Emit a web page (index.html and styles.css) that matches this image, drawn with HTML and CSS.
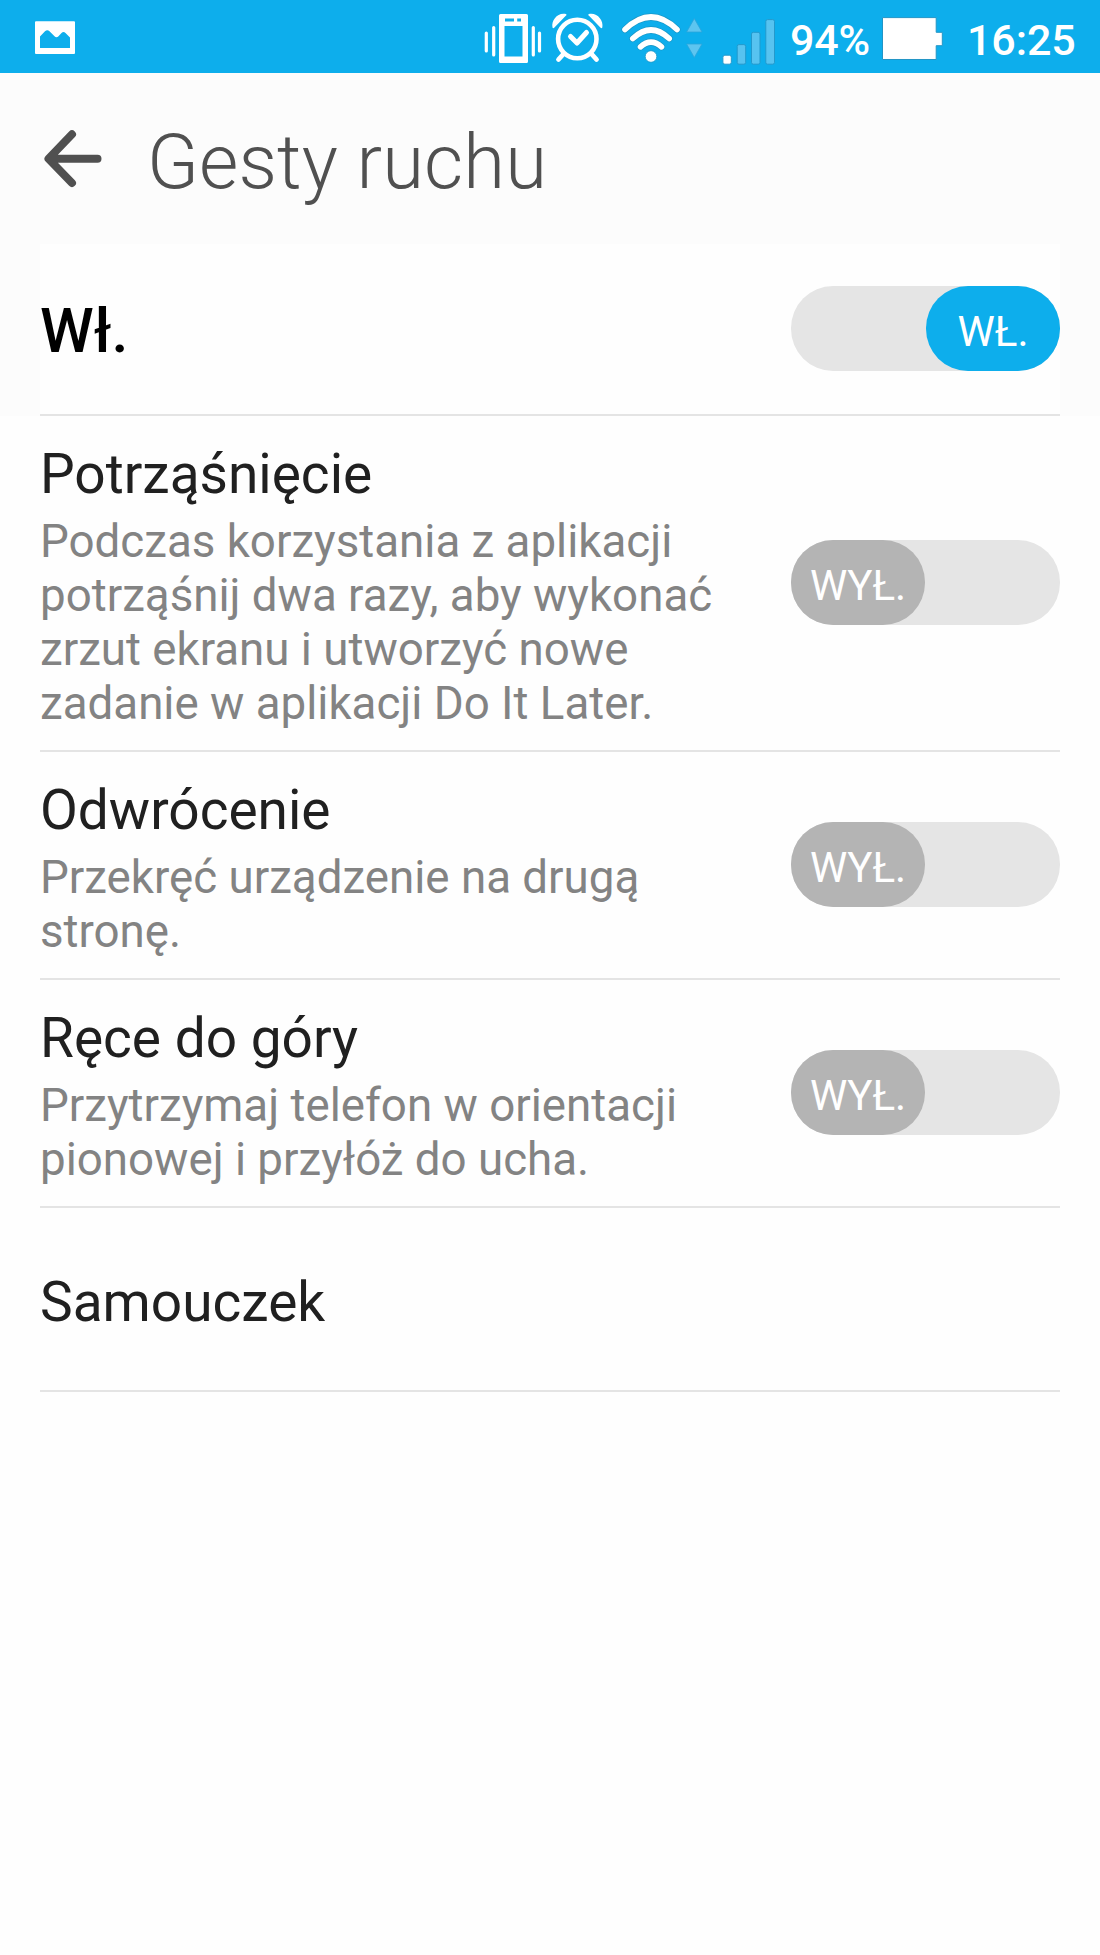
FILE: index.html
```html
<!DOCTYPE html>
<html lang="pl">
<head>
<meta charset="utf-8">
<title>Gesty ruchu</title>
<link rel="stylesheet" href="styles.css">
</head>
<body>
<header class="status-bar">
  <svg class="icon-gallery" width="40" height="73" viewBox="35 0 40 73" aria-hidden="true">
    <path fill="#fff" fill-rule="evenodd" d="M36 21.300h38q1 0 1 1V53q0 1-1 1H36q-1 0-1-1V22.300q0-1 1-1zM40 36.500V48h30V37.500l-4.500-4.500q-2-2-4 0l-3 3.200q-2 2-4 0L49.500 31.200q-2.200-2-4.500 0z"/>
  </svg>
  <div class="status-icons">
    <svg width="66" height="73" viewBox="482 0 66 73" aria-hidden="true">
      <path fill="#fff" fill-rule="evenodd" d="M500.500 14h26a1.500 1.500 0 0 1 1.500 1.500v46a1.500 1.500 0 0 1-1.500 1.500h-26a1.500 1.500 0 0 1-1.500-1.500v-46a1.500 1.500 0 0 1 1.500-1.500zM504.500 26v30.500h18V26zM505 18.500v3h9v-3zM517.200 18.500v3h3.800v-3z"/>
      <path fill="none" stroke="#fff" stroke-width="3.200" stroke-linecap="round" d="M486.300 33v18M493.700 27.500v27.500M533.300 27.500v27.500M539.500 33v18"/>
    </svg>
    <svg width="56" height="73" viewBox="550 0 56 73" aria-hidden="true">
      <circle cx="577.300" cy="39" r="19.200" fill="none" stroke="#fff" stroke-width="4.600"/>
      <path fill="none" stroke="#fff" stroke-width="4.800" stroke-linecap="round" d="M563 54.500l-4.500 5M592 54.500l4.500 5"/>
      <path fill="none" stroke="#fff" stroke-width="5" stroke-linecap="round" stroke-linejoin="round" d="M570.500 36.500l6.500 6.500 9.500-10.500"/>
      <path fill="#fff" d="M552.500 27.500c-1.500-7.500 5.500-15.500 13.500-13.500.8.500.5 1.300-.2 1.800L554.200 27.700c-.6.600-1.400.6-1.700-.2zM602.300 27.500c1.500-7.500-5.500-15.500-13.500-13.500-.8.500-.5 1.300.2 1.800l11.600 11.900c.6.600 1.400.6 1.700-.2z"/>
    </svg>
    <svg width="100" height="73" viewBox="614 0 100 73" aria-hidden="true">
      <g fill="none" stroke-linecap="round">
        <path stroke="#1997c8" stroke-width="7" d="M625 29.500Q651 4.500 677 29.500M632.800 38.500Q651 21.500 669.200 38.500M640.500 46.800Q651 37.500 661.500 46.800"/>
        <path stroke="#fff" stroke-width="5.600" d="M625 29.500Q651 4.500 677 29.500M632.800 38.500Q651 21.500 669.200 38.500M640.500 46.800Q651 37.500 661.500 46.800"/>
      </g>
      <circle cx="651" cy="56.500" r="5.800" fill="#fff" stroke="#1997c8" stroke-width=".8"/>
      <path fill="#5dc5f0" stroke="#2ba5da" stroke-width=".8" stroke-linejoin="round" d="M694.300 18.500l7.700 13.500h-15.400zM694.300 57.500l7.700-13.500h-15.400z"/>
    </svg>
    <svg width="56" height="73" viewBox="720 0 56 73" aria-hidden="true">
      <g fill="#57c3f0" stroke="#2399cc">
        <rect x="722.900" y="55.200" width="8.400" height="9" rx="2" fill="#fff"/>
        <rect x="737.200" y="44.600" width="8.500" height="19.600" rx="1.800"/>
        <rect x="751.500" y="32.300" width="8.500" height="31.900" rx="1.800"/>
        <rect x="765.800" y="19.600" width="8.700" height="44.600" rx="1.800"/>
      </g>
    </svg>
  </div>
  <span class="status-text battery-level">94%</span>
  <svg class="icon-battery" width="62" height="73" viewBox="881 0 62 73" aria-hidden="true">
    <path fill="#fff" stroke="#2295c6" d="M882.500 17.600h53.700v14.700h6.100v13.400h-6.100v13.800h-53.700z"/>
  </svg>
  <span class="status-text clock">16:25</span>
</header>

<div class="title-bar">
  <svg width="60" height="60" viewBox="44 129 60 60" aria-label="Wstecz">
    <path fill="none" stroke="#505050" stroke-width="8" stroke-linecap="round" stroke-linejoin="round" d="M73 134.300L49.500 158.800 73 183M51 158.800h47.500"/>
  </svg>
  <h1 class="title">Gesty ruchu</h1>
</div>

<div class="master">
  <div class="master-row">
    <span class="master-label">Wł.</span>
    <div class="toggle on"><span class="thumb">WŁ.</span></div>
  </div>
</div>

<main class="list">
  <section class="row">
    <div class="row-text">
      <h2 class="row-title">Potrząśnięcie</h2>
      <p class="row-desc">Podczas korzystania z aplikacji<br>potrząśnij dwa razy, aby wykonać<br>zrzut ekranu i utworzyć nowe<br>zadanie w aplikacji Do It Later.</p>
    </div>
    <div class="toggle"><span class="thumb">WYŁ.</span></div>
  </section>
  <section class="row">
    <div class="row-text">
      <h2 class="row-title">Odwrócenie</h2>
      <p class="row-desc">Przekręć urządzenie na drugą<br>stronę.</p>
    </div>
    <div class="toggle"><span class="thumb">WYŁ.</span></div>
  </section>
  <section class="row">
    <div class="row-text">
      <h2 class="row-title">Ręce do góry</h2>
      <p class="row-desc">Przytrzymaj telefon w orientacji<br>pionowej i przyłóż do ucha.</p>
    </div>
    <div class="toggle"><span class="thumb">WYŁ.</span></div>
  </section>
  <section class="row row-single">
    <h2 class="row-title">Samouczek</h2>
  </section>
</main>
</body>
</html>
```
FILE: styles.css
```css
* { box-sizing: border-box; }

body {
  margin: 0;
  min-height: 1955px;
  background: #fefefe;
  font-family: Roboto, "Liberation Sans", sans-serif;
}

h1, h2, p { margin: 0; font-weight: 400; }
svg { display: block; flex: none; }

.status-bar {
  display: flex;
  align-items: center;
  height: 73px;
  padding: 0 25px 0 35px;
  background: #0daeec;
}
.status-icons {
  display: grid;
  grid-template-columns: 68px 64px 106px 56px;
  margin-left: auto;
}
.status-text {
  color: #fff;
  font-size: 43px;
  font-weight: 500;
  line-height: 73px;
  white-space: nowrap;
  padding-top: 7px;
}
.battery-level { width: 90px; margin-left: 14px; letter-spacing: -0.2px; }
.icon-battery { margin-left: 1px; }
.clock { width: 108px; margin-left: 24px; letter-spacing: -0.1px; }

.title-bar {
  display: flex;
  align-items: center;
  gap: 44px;
  height: 171px;
  padding-left: 43px;
  background: #fcfcfc;
}
.title {
  color: #505050;
  font-size: 76px;
  font-weight: 300;
  line-height: 90px;
  padding-top: 6px;
  letter-spacing: 0.1px;
  white-space: nowrap;
}

.master { padding: 0 40px; background: #fcfcfc; }
.master-row {
  display: flex;
  align-items: center;
  justify-content: space-between;
  height: 172px;
  border-bottom: 2px solid #e4e4e4;
  background: #fefefe;
}
.master-label {
  padding-top: 4px;
  color: #000;
  font-size: 61px;
  font-weight: 500;
  line-height: 70px;
}

.toggle {
  display: flex;
  flex: none;
  width: 269px;
  height: 85px;
  margin-bottom: 1px;
  border-radius: 42px;
  background: #e5e5e5;
}
.toggle.on { justify-content: flex-end; }
.thumb {
  width: 134px;
  height: 85px;
  padding-top: 3px;
  border-radius: 42px;
  background: #b4b4b4;
  color: #fff;
  font-size: 42px;
  line-height: 85px;
  text-align: center;
}
.toggle.on .thumb { background: #0daeec; }

.list { padding: 0 40px; }
.row {
  display: flex;
  align-items: center;
  justify-content: space-between;
  border-bottom: 2px solid #e4e4e4;
}
.row-text { padding: 27px 0 19px; }
.row-title { color: #202020; font-size: 55px; line-height: 63px; white-space: nowrap; }
.row-desc { margin-top: 9px; color: #838383; font-size: 45.7px; line-height: 54px; white-space: nowrap; }
.row-single { height: 184px; padding-top: 6px; }
```
